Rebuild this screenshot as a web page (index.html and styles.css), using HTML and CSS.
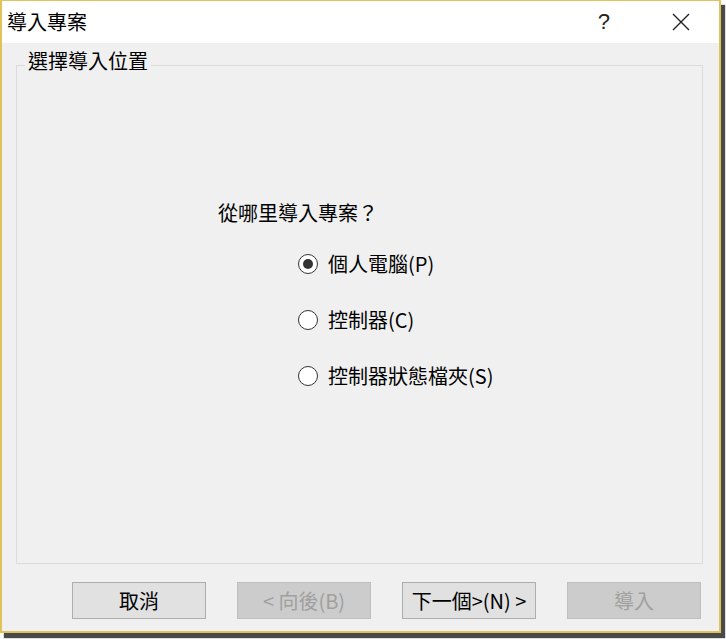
FILE: index.html
```html
<!DOCTYPE html>
<html lang="zh-Hant">
<head>
<meta charset="utf-8">
<title>導入專案</title>
<link rel="stylesheet" href="styles.css">
</head>
<body>
<div class="window">
  <div class="titlebar">
    <span class="title">導入專案</span>
    <div class="tb-btns">
      <span class="help">?</span>
      <span class="close">
        <svg width="18" height="18" viewBox="0 0 18 18"><path d="M1 1 L17 17 M17 1 L1 17" stroke="#222" stroke-width="1.4" fill="none"/></svg>
      </span>
    </div>
  </div>
  <div class="body">
    <fieldset class="group">
      <legend>選擇導入位置</legend>
      <div class="content">
        <p class="question">從哪里導入專案？</p>
        <div class="options">
          <label class="option"><span class="radio checked"></span><span>個人電腦(P)</span></label>
          <label class="option"><span class="radio"></span><span>控制器(C)</span></label>
          <label class="option"><span class="radio"></span><span>控制器狀態檔夾(S)</span></label>
        </div>
      </div>
    </fieldset>
    <div class="buttons">
      <button class="btn">取消</button>
      <button class="btn disabled">&lt; 向後(B)</button>
      <button class="btn">下一個&gt;(N) &gt;</button>
      <button class="btn disabled">導入</button>
    </div>
  </div>
</div>
</body>
</html>
```
FILE: styles.css
```css
html, body {
  margin: 0;
  padding: 0;
  background: #ffffff;
}
body {
  width: 726px;
  height: 639px;
  overflow: hidden;
  font-family: "Noto Sans CJK TC", "Noto Sans", sans-serif;
  color: #000;
}
.window {
  box-sizing: border-box;
  width: 721px;
  height: 633px;
  border: 2px solid #e2c35b;
  border-top-width: 1px;
  box-shadow: 4px 5px 1px 0 #4a4a4a;
  display: flex;
  flex-direction: column;
  background: #f0f0f0;
}
.titlebar {
  height: 42px;
  background: #ffffff;
  display: flex;
  align-items: center;
  justify-content: space-between;
  padding-left: 5px;
  padding-right: 29px;
}
.title {
  font-size: 20px;
  line-height: 24px;
  color: #000;
}
.tb-btns {
  display: flex;
  align-items: center;
  gap: 62px;
}
.help {
  font-family: "Liberation Sans", "DejaVu Sans", sans-serif;
  font-size: 22px;
  line-height: 24px;
  color: #222;
}
.close {
  display: flex;
  width: 18px;
  height: 18px;
}
.body {
  flex: 1;
  display: flex;
  flex-direction: column;
  padding: 4px 16px 12px 14px;
}
.group {
  flex: 1;
  margin: 0;
  padding: 0;
  border: 1px solid #dcdcdc;
  min-width: 0;
}
.group legend {
  margin-left: 8px;
  padding: 0 3px 8px 3px;
  font-size: 20px;
  line-height: 28px;
}
.content {
  padding: 118px 0 0 201px;
}
.question {
  margin: 0;
  font-size: 20px;
  line-height: 24px;
}
.options {
  margin-top: 27px;
  margin-left: 80px;
  display: flex;
  flex-direction: column;
  gap: 32px;
}
.option {
  display: flex;
  align-items: center;
  gap: 10px;
  font-size: 20px;
  line-height: 24px;
}
.radio {
  box-sizing: border-box;
  width: 20px;
  height: 20px;
  border: 1.5px solid #333;
  border-radius: 50%;
  background: #fff;
  display: flex;
  align-items: center;
  justify-content: center;
}
.radio.checked::after {
  content: "";
  width: 10px;
  height: 10px;
  border-radius: 50%;
  background: #333;
}
.buttons {
  margin-top: 18px;
  display: flex;
  justify-content: flex-end;
  gap: 31px;
  padding-right: 2px;
}
.btn {
  box-sizing: border-box;
  width: 134px;
  height: 37px;
  background: #e1e1e1;
  border: 1px solid #adadad;
  font-family: "Noto Sans CJK TC", "Noto Sans", sans-serif;
  font-size: 20px;
  line-height: 24px;
  color: #000;
  padding: 0;
}
.btn.disabled {
  background: #cccccc;
  border-color: #bfbfbf;
  color: #a0a0a0;
}
```
